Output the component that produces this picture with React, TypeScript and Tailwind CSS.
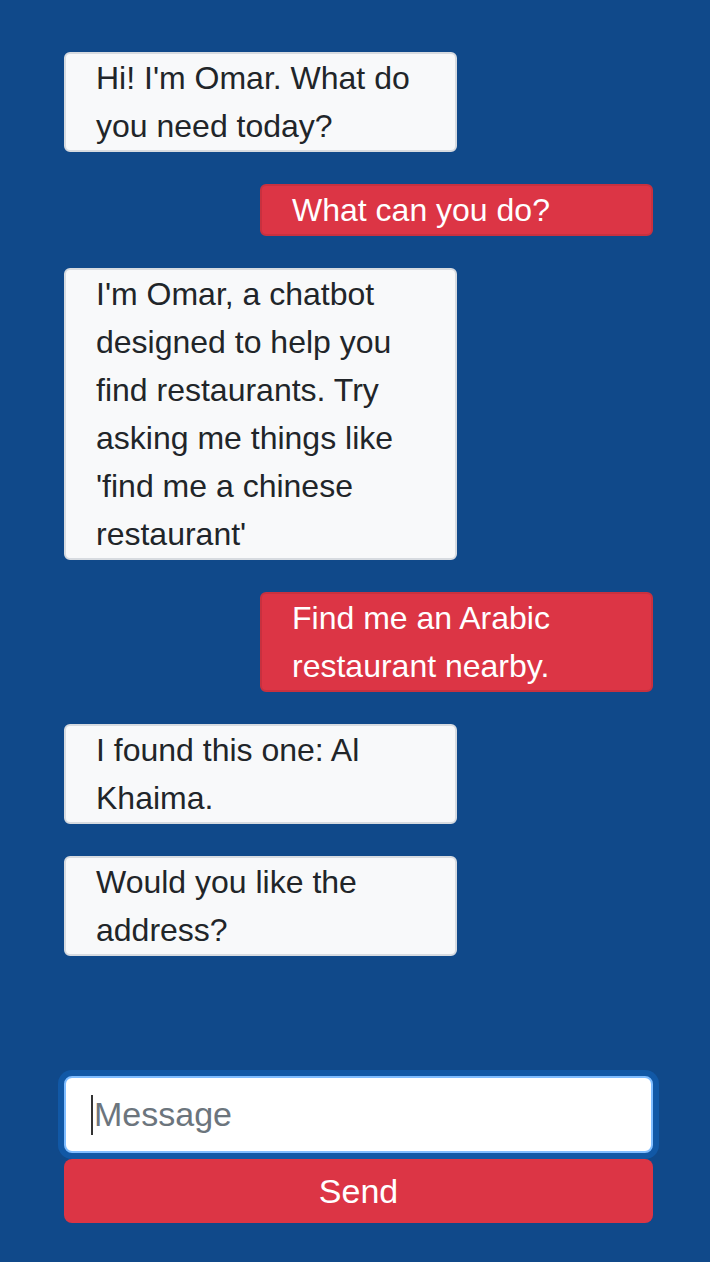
import React from "react";

type Msg = { from: "bot" | "user"; text: string };

const messages: Msg[] = [
  { from: "bot", text: "Hi! I'm Omar. What do you need today?" },
  { from: "user", text: "What can you do?" },
  {
    from: "bot",
    text: "I'm Omar, a chatbot designed to help you find restaurants. Try asking me things like 'find me a chinese restaurant'",
  },
  { from: "user", text: "Find me an Arabic restaurant nearby." },
  { from: "bot", text: "I found this one: Al Khaima." },
  { from: "bot", text: "Would you like the address?" },
];

export default function App() {
  return (
    <div
      className="flex h-[1262px] w-[710px] flex-col bg-[#10498a] pt-[52px] pb-[39px]"
      style={{ fontFamily: '"Liberation Sans", Arial, sans-serif' }}
    >
      <div className="ml-[64px] flex w-[589px] flex-col gap-[32px]">
        {messages.map((m, i) =>
          m.from === "bot" ? (
            <div
              key={i}
              className="w-[393px] rounded-[6px] border-2 border-[#d7dbe0] bg-[#f8f9fa] px-[30px] text-[32px] leading-[48px] text-[#212529]"
            >
              {m.text}
            </div>
          ) : (
            <div
              key={i}
              className="ml-auto w-[393px] rounded-[6px] border-2 border-[#c8313f] bg-[#dc3545] px-[30px] text-[32px] leading-[48px] text-white"
            >
              {m.text}
            </div>
          )
        )}
      </div>
      <div className="mt-auto ml-[64px] flex w-[589px] flex-col gap-[6px]">
        <div className="flex h-[77px] items-center rounded-[8px] border-2 border-[#80bdff] bg-white pl-[25px] shadow-[0_0_0_6px_#1158a6]">
          <span className="h-[40px] w-[2px] bg-[#333]" />
          <input
            className="h-full flex-1 bg-transparent pl-[1px] text-[34px] text-[#495057] outline-none placeholder:text-[#6c757d]"
            placeholder="Message"
          />
        </div>
        <button className="h-[64px] w-full rounded-[8px] bg-[#dc3545] text-[34px] text-white">
          Send
        </button>
      </div>
    </div>
  );
}
